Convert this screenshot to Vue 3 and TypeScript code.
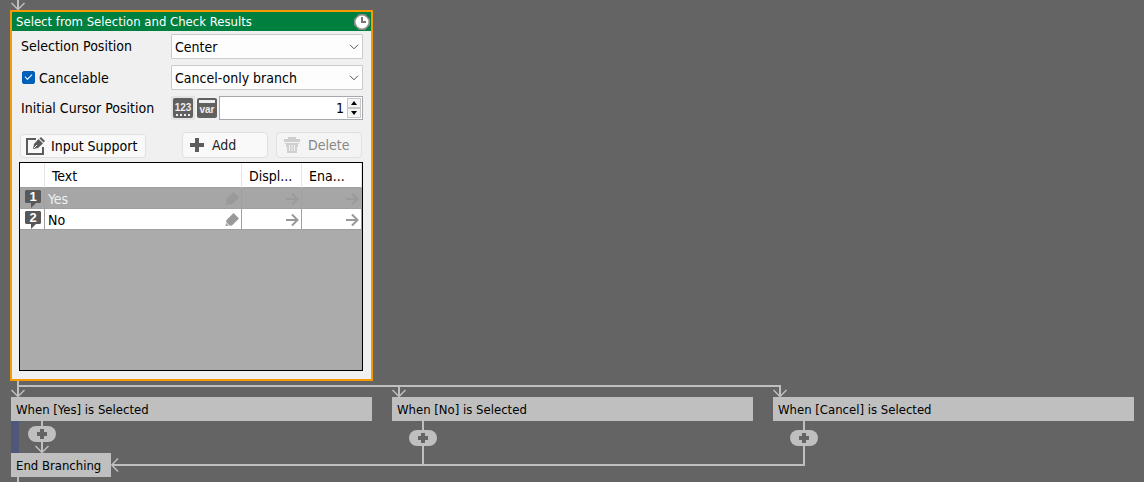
<script setup lang="ts">
import { ref } from 'vue'

interface Choice {
  id: number
  text: string
}

interface Branch {
  label: string
  stem: string
}

const position = ref('Center')
const cancelable = ref(true)
const cancelMode = ref('Cancel-only branch')
const cursor = ref(1)
const selected = ref(1)
const choices: Choice[] = [
  { id: 1, text: 'Yes' },
  { id: 2, text: 'No' },
]
const branches: Branch[] = [
  { label: 'When [Yes] is Selected', stem: 'M7 0V15M7 5H14' },
  { label: 'When [No] is Selected', stem: 'M7 5V15M0 5H14' },
  { label: 'When [Cancel] is Selected', stem: 'M7 5V15M0 5H8' },
]
</script>

<template>
  <main class="flow">
    <svg class="entry" width="14" height="10" viewBox="0 0 14 10">
      <path class="line" d="M7 0V9" />
      <path class="head" d="M0.5 3L7 9.5L13.5 3" />
    </svg>

    <div class="columns">
      <section class="panel">
        <header class="title">
          <h1>Select from Selection and Check Results</h1>
          <svg width="16" height="16" viewBox="0 0 16 16">
            <path d="M5 0H11L16 5V11L11 16H5L0 11V5Z" fill="#8a8a8a" />
            <circle cx="8" cy="8" r="6.5" fill="#fff" />
            <path d="M8 3V8H12" fill="none" stroke="#777" stroke-width="2" />
          </svg>
        </header>

        <div class="body">
          <div class="row">
            <label class="name" for="position">Selection Position</label>
            <div class="picker">
              <select id="position" v-model="position">
                <option>Center</option>
                <option>Left</option>
                <option>Right</option>
              </select>
              <svg width="10" height="6" viewBox="0 0 10 6"><path d="M1 0.8L5 4.8L9 0.8" /></svg>
            </div>
          </div>

          <div class="row">
            <label class="check">
              <input v-model="cancelable" type="checkbox" />
              <span>Cancelable</span>
            </label>
            <div class="picker">
              <select v-model="cancelMode" aria-label="Cancel behavior">
                <option>Cancel-only branch</option>
                <option>Same as last choice</option>
              </select>
              <svg width="10" height="6" viewBox="0 0 10 6"><path d="M1 0.8L5 4.8L9 0.8" /></svg>
            </div>
          </div>

          <div class="row">
            <label class="name" for="cursor">Initial Cursor Position</label>
            <div class="value">
              <button class="kind chosen" type="button" aria-label="Number">
                <svg width="20" height="20" viewBox="0 0 20 20">
                  <rect width="20" height="20" rx="2" fill="#606060" />
                  <text x="10" y="13" text-anchor="middle">123</text>
                  <path d="M3 17H17" stroke="#eee" stroke-width="2" stroke-dasharray="2 2" />
                </svg>
              </button>
              <button class="kind" type="button" aria-label="Variable">
                <svg width="20" height="20" viewBox="0 0 20 20">
                  <rect width="20" height="20" rx="2" fill="#606060" />
                  <rect x="2" y="2" width="16" height="3" fill="#eee" />
                  <text x="10" y="15" text-anchor="middle">var</text>
                </svg>
              </button>
              <div class="spin">
                <input id="cursor" v-model.number="cursor" type="number" />
                <div class="steps">
                  <button type="button" aria-label="Increase" @click="cursor++">
                    <svg width="6" height="4" viewBox="0 0 6 4"><path d="M0 4L3 0L6 4Z" /></svg>
                  </button>
                  <button type="button" aria-label="Decrease" @click="cursor--">
                    <svg width="6" height="4" viewBox="0 0 6 4"><path d="M0 0L3 4L6 0Z" /></svg>
                  </button>
                </div>
              </div>
            </div>
          </div>

          <div class="tools">
            <button class="tool support" type="button">
              <svg width="20" height="18" viewBox="0 0 20 18">
                <path d="M10 2H1V17H17V10" fill="none" stroke="#5c5c5c" stroke-width="2" />
                <path d="M7 12L8 7L12.500 2L17 6.500L12 11Z" fill="#5c5c5c" />
                <path d="M13.500 1.500L15 0L19 4L17.500 5.500Z" fill="#5c5c5c" />
                <path d="M8 11L11 8" stroke="#f9f9f9" />
              </svg>
              Input Support
            </button>
            <button class="tool add" type="button">
              <svg width="14" height="14" viewBox="0 0 14 14">
                <path d="M7 0V14M0 7H14" stroke="#5c5c5c" stroke-width="4" />
              </svg>
              Add
            </button>
            <button class="tool delete" type="button" disabled>
              <svg width="16" height="16" viewBox="0 0 16 16" fill="none" stroke="#cfcfcf">
                <path d="M5 2V1H11V2" stroke-width="2" />
                <path d="M0 3.500H16" stroke-width="3" />
                <path d="M1 6.500H15" stroke-width="1" />
                <path d="M2 7H14V10H13V16H3V10H2Z" fill="#cfcfcf" stroke="none" />
                <path d="M5.500 8V14M8 8V14M10.500 8V14" stroke="#f4f4f4" />
              </svg>
              Delete
            </button>
          </div>

          <div class="list">
            <table>
              <colgroup>
                <col class="c-icon" />
                <col />
                <col class="c-flag" />
                <col class="c-flag" />
              </colgroup>
              <thead>
                <tr>
                  <th></th>
                  <th>Text</th>
                  <th>Displ...</th>
                  <th>Ena...</th>
                </tr>
              </thead>
              <tbody>
                <tr
                  v-for="c in choices"
                  :key="c.id"
                  :class="{ active: c.id === selected }"
                  @click="selected = c.id"
                >
                  <td class="num">
                    <svg width="16" height="18" viewBox="0 0 16 18">
                      <path d="M1 0H15L16 1V12L15 13H11L6 18V13H1L0 12V1Z" fill="#585858" />
                      <text x="8" y="11" text-anchor="middle">{{ c.id }}</text>
                    </svg>
                  </td>
                  <td>
                    <div class="cell">
                      <span>{{ c.text }}</span>
                      <svg class="glyph" width="14" height="14" viewBox="0 0 14 14">
                        <path d="M6 2.500L8.500 0L14 5.500L12 7.500L7 12.500L0.500 13L1.500 7Z" fill="currentColor" />
                        <path class="nib" d="M0 8.500L5 13.500" />
                      </svg>
                    </div>
                  </td>
                  <td v-for="n in 2" :key="n">
                    <div class="cell end">
                      <svg class="glyph" width="13" height="12" viewBox="0 0 13 12">
                        <path d="M0 6H12M6 0.500L11.500 6L6 11.500" fill="none" stroke="currentColor" stroke-width="2" />
                      </svg>
                    </div>
                  </td>
                </tr>
              </tbody>
            </table>
          </div>
        </div>
      </section>
    </div>

    <div class="columns">
      <section v-for="(b, i) in branches" :key="b.label" class="branch">
        <div class="drop">
          <svg width="14" height="16" viewBox="0 0 14 16">
            <path class="line" :d="b.stem" />
            <path class="head" d="M0.5 9L7 15.5L13.5 9" />
          </svg>
          <span v-if="i < branches.length - 1" class="rail"></span>
        </div>
        <h2 class="bar">{{ b.label }}</h2>

        <template v-if="i === 0">
          <div class="scope">
            <div class="stack">
              <span class="stem short"></span>
              <button class="plus" type="button" aria-label="Add command">
                <svg width="10" height="10" viewBox="0 0 10 10"><path d="M5 0V10M0 5H10" /></svg>
              </button>
              <svg width="14" height="11" viewBox="0 0 14 11">
                <path class="line" d="M7 0V10" />
                <path class="head" d="M0.5 4L7 10.500L13.5 4" />
              </svg>
            </div>
          </div>
          <div class="finish">
            <h2 class="bar">End Branching</h2>
            <svg width="8" height="14" viewBox="0 0 8 14">
              <path class="line" d="M1 7H8" />
              <path class="head" d="M7 0.500L0.700 7L7 13.500" />
            </svg>
            <span class="rail"></span>
          </div>
          <span class="tail"></span>
        </template>

        <div v-else class="return" :class="{ last: i === branches.length - 1 }">
          <div class="stack">
            <span class="stem"></span>
            <button class="plus" type="button" aria-label="Add command">
              <svg width="10" height="10" viewBox="0 0 10 10"><path d="M5 0V10M0 5H10" /></svg>
            </button>
            <span class="stem grow"></span>
          </div>
        </div>
      </section>
    </div>
  </main>
</template>

<style>
body {
  margin: 0;
  background: #646464;
}
</style>

<style scoped>
.flow {
  box-sizing: border-box;
  padding: 0 10px 0 11px;
  overflow: hidden;
  font: 14px/20px "DejaVu Sans Condensed", "DejaVu Sans", sans-serif;
  color: #000;
}
.flow svg {
  display: block;
  flex: none;
}
button,
input,
select {
  font: inherit;
  color: inherit;
}
h1,
h2 {
  margin: 0;
  font-size: 13px;
  font-weight: normal;
}
.columns {
  display: grid;
  grid-template-columns: repeat(3, minmax(0, 1fr));
  gap: 20px;
}
.line {
  fill: none;
  stroke: #bfbfbf;
  stroke-width: 2;
}
.head {
  fill: none;
  stroke: #bfbfbf;
  stroke-width: 1.5;
}

/* Command panel */
.panel {
  margin: 0 -1px;
  border: 2px solid #f59a00;
  background: #f0f0f0;
}
.title {
  display: flex;
  align-items: center;
  justify-content: space-between;
  height: 19px;
  padding: 0 1px 0 4px;
  background: #00803f;
  color: #fff;
}
.body {
  padding: 3px 8px 8px 7px;
}
.row {
  display: grid;
  grid-template-columns: 152px minmax(0, 1fr);
  align-items: center;
  height: 25px;
  margin-bottom: 6px;
}
.row > label {
  padding-left: 2px;
}
.name {
  padding-bottom: 2px;
}
.check {
  display: flex;
  align-items: center;
  gap: 4px;
}
.check input {
  appearance: none;
  width: 13px;
  height: 13px;
  margin: 0 0 0 1px;
  border-radius: 2px;
  background: #fff;
  border: 1px solid #888;
}
.check input:checked {
  border-color: #005fb8;
  background: #005fb8;
}
.check input:checked::after {
  content: "";
  display: block;
  width: 6px;
  height: 3px;
  margin: 2px 0 0 2px;
  border-left: 1px solid #fff;
  border-bottom: 1px solid #fff;
  transform: rotate(-45deg);
}
.picker {
  display: grid;
  grid-template-columns: minmax(0, 1fr);
  align-items: center;
}
.picker > * {
  grid-area: 1 / 1;
}
.picker select {
  appearance: none;
  width: 100%;
  height: 25px;
  padding: 1px 20px 0 3px;
  border: 1px solid #cacaca;
  border-radius: 1px;
  background: #fdfdfd;
}
.picker svg {
  justify-self: end;
  margin-right: 4px;
  fill: none;
  stroke: #555;
  pointer-events: none;
}
.value {
  display: flex;
  align-self: start;
  align-items: center;
}
.kind {
  padding: 2px;
  border: 0;
  background: none;
}
.chosen {
  background: #e3e3e3;
}
.kind text {
  fill: #eee;
  font: bold 10px "Liberation Sans", sans-serif;
}
.spin {
  flex: 1;
  display: flex;
  box-sizing: border-box;
  height: 24px;
  min-width: 0;
  border: 1px solid #a5a8ad;
  background: #fff;
}
.spin input {
  flex: 1;
  min-width: 0;
  padding: 0 2px;
  border: 0;
  background: none;
  text-align: right;
  appearance: textfield;
}
.spin input::-webkit-inner-spin-button {
  display: none;
}
.steps {
  display: grid;
  grid-template-rows: 1fr 1fr;
  width: 14px;
  padding: 1px;
}
.steps button {
  display: grid;
  place-items: center;
  padding: 0;
  border: 1px solid #c8c8c8;
  background: #f4f4f4;
}
.tools {
  display: flex;
  align-items: flex-end;
  height: 31px;
  padding: 0 1px;
  margin-bottom: 4px;
}
.tool {
  display: flex;
  align-items: center;
  box-sizing: border-box;
  height: 26px;
  width: 86px;
  padding: 0 7px;
  gap: 8px;
  border: 1px solid #e0e0e0;
  border-radius: 4px;
  background: #f9f9f9;
  white-space: nowrap;
}
.support {
  width: 126px;
  height: 24px;
  padding: 0 5px;
  gap: 5px;
}
.add {
  margin-left: auto;
  margin-right: 8px;
  color: #222;
}
.delete {
  background: #f4f4f4;
  color: #868686;
}
.list {
  height: 207px;
  border: 1px solid #000;
  background: #ababab;
}
table {
  width: 100%;
  table-layout: fixed;
  border-collapse: separate;
  border-spacing: 0;
}
.c-icon {
  width: 25px;
}
.c-flag {
  width: 60px;
}
th,
td {
  padding: 0;
  border-right: 1px solid #a0a0a0;
  border-bottom: 1px solid #a0a0a0;
  background: #fff;
  text-align: left;
  font-weight: normal;
}
th {
  height: 22px;
  padding: 2px 0 0 7px;
  border-right-color: #e5e5e5;
  white-space: nowrap;
}
td {
  height: 20px;
}
.active td {
  background: #a6a6a6;
  border-color: #a0a0a0;
  color: #f0f0f0;
}
.num svg {
  margin: 1px 0 0 5px;
}
.num text {
  fill: #fff;
  font: bold 13px "Liberation Sans", sans-serif;
}
.cell {
  display: flex;
  align-items: center;
  justify-content: space-between;
  box-sizing: border-box;
  height: 20px;
  padding: 2px 2px 0 3px;
}
.end {
  justify-content: flex-end;
}
.glyph {
  color: #999;
}
.active .glyph {
  color: #9a9a9a;
}
.nib {
  stroke: #fff;
}
.active .nib {
  stroke: #a6a6a6;
}

/* Branch diagram */
.branch {
  min-width: 0;
}
.drop {
  display: flex;
  margin-right: -20px;
}
.rail {
  flex: 1;
  height: 2px;
  background: #bfbfbf;
}
.drop .rail {
  margin-top: 4px;
}
.bar {
  height: 24px;
  padding-left: 5px;
  background: #bfbfbf;
  line-height: 26px;
  white-space: nowrap;
}
.scope {
  height: 32px;
  border-left: 8px solid #50577a;
}
.scope .stack {
  margin-left: 9px;
}
.stack {
  display: flex;
  flex-direction: column;
  align-items: center;
  width: 28px;
  height: 100%;
  margin-left: 17px;
}
.stem {
  width: 2px;
  height: 9px;
  background: #bfbfbf;
}
.short {
  height: 5px;
}
.grow {
  flex: 1;
}
.plus {
  display: grid;
  place-items: center;
  width: 28px;
  height: 16px;
  padding: 0;
  border: 0;
  border-radius: 8px;
  background: #bfbfbf;
}
.plus path {
  stroke: #646464;
  stroke-width: 4;
}
.finish {
  display: flex;
  align-items: center;
  margin-right: -20px;
}
.finish .bar {
  width: 95px;
}
.tail {
  display: block;
  width: 2px;
  height: 5px;
  margin-left: 6px;
  background: #bfbfbf;
}
.return {
  height: 43px;
  margin-right: -20px;
  border-bottom: 2px solid #bfbfbf;
}
.last {
  width: 32px;
}
</style>
